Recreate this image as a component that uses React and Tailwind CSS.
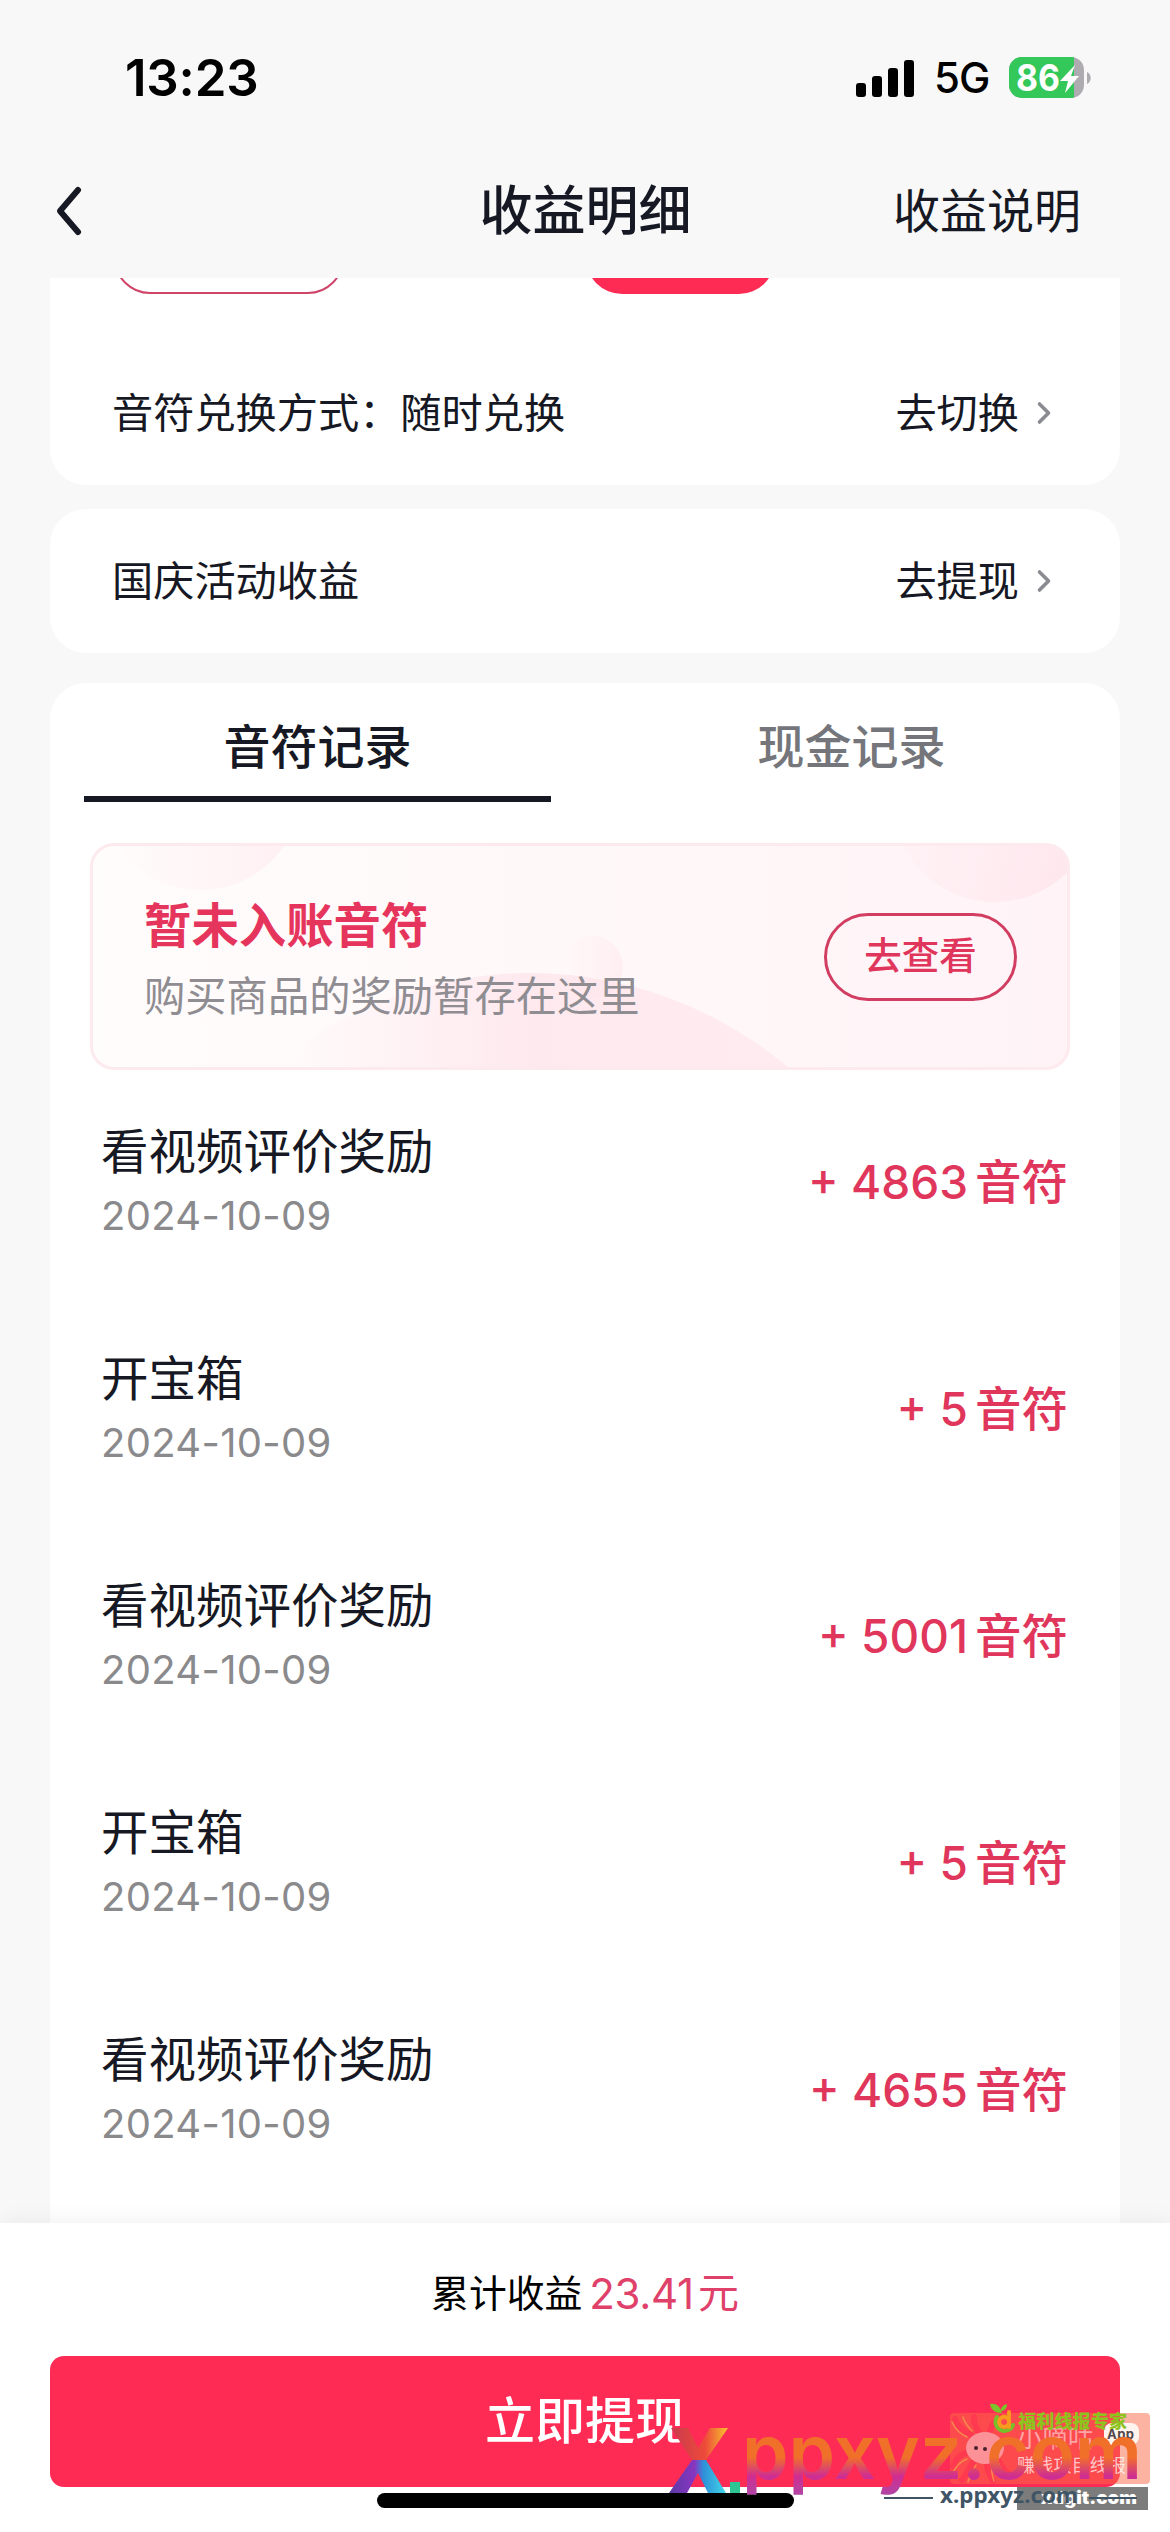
import { ChevronRight } from 'lucide-react';

const records = [
  { id: 1, title: '看视频评价奖励', date: '2024-10-09', amount: 4863 },
  { id: 2, title: '开宝箱', date: '2024-10-09', amount: 5 },
  { id: 3, title: '看视频评价奖励', date: '2024-10-09', amount: 5001 },
  { id: 4, title: '开宝箱', date: '2024-10-09', amount: 5 },
  { id: 5, title: '看视频评价奖励', date: '2024-10-09', amount: 4655 },
];

function StatusBar() {
  return (
    <div className="h-[144px] flex items-start justify-between pl-[125px] pr-[78px] pt-[46px] text-black">
      <span className="text-[51px] leading-[64px] font-semibold tracking-[-0.2px]">13:23</span>
      <div className="flex items-center h-[64px]">
        <div className="flex items-end gap-[6px] h-[37px]">
          <span className="w-[10px] h-[14px] rounded-[3px] bg-black" />
          <span className="w-[10px] h-[21px] rounded-[3px] bg-black" />
          <span className="w-[10px] h-[29px] rounded-[3px] bg-black" />
          <span className="w-[10px] h-[37px] rounded-[3px] bg-black" />
        </div>
        <span className="ml-[20px] w-[75px] text-[42px] leading-[64px] font-medium tracking-[-1px]">5G</span>
        <svg className="w-[83px] h-[42px] overflow-visible" viewBox="0 0 83 42">
          <defs>
            <clipPath id="battery"><rect x="0" y="0" width="75" height="41" rx="13" /></clipPath>
          </defs>
          <g clipPath="url(#battery)">
            <rect width="75" height="41" fill="#aeacb0" />
            <rect width="65" height="41" fill="#34c759" />
          </g>
          <path d="M78 15c5 2 5 10 0 12z" fill="#aeacb0" />
          <text x="7" y="34" fontSize="37" fontWeight="700" fill="#fff" textLength="44" lengthAdjust="spacingAndGlyphs">86</text>
          <path d="M66 8 51 24h8l-3 12 14-17h-8z" fill="#fff" />
        </svg>
      </div>
    </div>
  );
}

function NavBar() {
  return (
    <div className="h-[134px] grid grid-cols-[1fr_auto_1fr] items-center pl-[54px] pr-[89px] text-[#161823]">
      <svg className="w-[30px] h-[52px]" viewBox="0 0 30 52" fill="none" stroke="currentColor" strokeWidth="6" strokeLinecap="round" strokeLinejoin="round">
        <path d="M24 5 6 26l18 21" />
      </svg>
      <h1 className="text-[53px] leading-[64px] font-medium ml-[36px]">收益明细</h1>
      <span className="justify-self-end text-[47px] leading-[64px]">收益说明</span>
    </div>
  );
}

function LinkRow({ label, action }) {
  return (
    <div className="flex items-center justify-between pl-[62px] pr-[58px] text-[41.2px] leading-[60px] text-[#161823]">
      <span>{label}</span>
      <span className="flex items-center">
        {action}
        <ChevronRight className="ml-[7px] w-[36px] h-[36px] text-[#8a8b91]" strokeWidth={2.4} />
      </span>
    </div>
  );
}

function PendingBanner() {
  return (
    <div className="relative overflow-hidden ml-[40px] mt-[41px] w-[980px] h-[227px] rounded-[24px] border-[3px] border-[#fdeaee] bg-linear-to-r from-[#fffcfc] via-[#fff8f9] to-[#fff3f7] flex items-center justify-between pl-[51px] pr-[50px]">
      <svg className="absolute -left-[3px] -top-[3px] w-[980px] h-[227px]" viewBox="0 0 980 227">
        <defs>
          <linearGradient id="blob" x1="0" y1="0" x2="1" y2="0.3">
            <stop offset="0" stopColor="#ffe3ea" stopOpacity="0" />
            <stop offset="1" stopColor="#fde0e8" stopOpacity="0.6" />
          </linearGradient>
          <linearGradient id="blobFaint" x1="0" y1="0" x2="1" y2="0">
            <stop offset="0" stopColor="#ffe9ee" stopOpacity="0" />
            <stop offset="1" stopColor="#ffe6ec" stopOpacity="0.55" />
          </linearGradient>
          <linearGradient id="wave" x1="0.2" y1="0" x2="0.75" y2="0">
            <stop offset="0" stopColor="#ffe3ec" stopOpacity="0" />
            <stop offset="0.55" stopColor="#fde2ea" stopOpacity="0.7" />
            <stop offset="1" stopColor="#ffe3ea" stopOpacity="0.6" />
          </linearGradient>
        </defs>
        <circle cx="111" cy="-53" r="100" fill="url(#blobFaint)" />
        <circle cx="905" cy="-44" r="103" fill="url(#blob)" />
        <circle cx="502" cy="124" r="31" fill="url(#blobFaint)" />
        <circle cx="440" cy="530" r="400" fill="url(#wave)" />
      </svg>
      <div className="relative pt-[6px]">
        <div className="text-[47.4px] leading-[64px] font-bold text-[#e6355c]">暂未入账音符</div>
        <div className="mt-[8px] text-[41.3px] leading-[60px] text-[#8f8d92]">购买商品的奖励暂存在这里</div>
      </div>
      <button className="relative w-[193px] h-[88px] rounded-full border-[3px] border-[#d23d62] text-[37.5px] font-medium text-[#e0365c]">去查看</button>
    </div>
  );
}

function RecordRow({ record }) {
  return (
    <div className="h-[227px] flex items-start justify-between pl-[51px] pr-[52px]">
      <div>
        <div className="text-[47.5px] leading-[64px] text-[#161823]">{record.title}</div>
        <div className="mt-[4px] text-[40px] leading-[56px] tracking-[0.3px] text-[#8a8a8c]">{record.date}</div>
      </div>
      <div className="mt-[30px] flex items-center font-medium text-[#e0365c] leading-[64px]">
        <span className="text-[46px] mr-[7px]">+ {record.amount}</span>
        <span className="text-[46.5px]">音符</span>
      </div>
    </div>
  );
}

// Site marks stamped over the lower right corner
function Watermarks() {
  return (
    <svg className="absolute left-[660px] bottom-0 w-[510px] h-[132px] pointer-events-none" viewBox="660 2400 510 132">
      <defs>
        <linearGradient id="xTop" x1="0" y1="0" x2="1" y2="0">
          <stop offset="0" stopColor="#c93a4e" />
          <stop offset="0.6" stopColor="#ee4a3a" />
          <stop offset="1" stopColor="#f7c52e" />
        </linearGradient>
        <linearGradient id="xBottom" x1="0" y1="0" x2="1" y2="0">
          <stop offset="0" stopColor="#5a3aa8" />
          <stop offset="0.45" stopColor="#8a35c0" />
          <stop offset="0.6" stopColor="#2f8fd8" />
          <stop offset="1" stopColor="#3fd8e8" />
        </linearGradient>
        <linearGradient id="site" gradientUnits="userSpaceOnUse" x1="0" y1="2437" x2="0" y2="2495">
          <stop offset="0.35" stopColor="#f0702a" />
          <stop offset="0.68" stopColor="#cf2d92" />
          <stop offset="1" stopColor="#b046a4" />
        </linearGradient>
      </defs>

      <rect x="950" y="2413" width="200" height="71" rx="4" fill="#fa6846" fillOpacity="0.5" />
      <g fill="none" strokeLinecap="round">
        <path d="M972 2436c-8-6-14-8-17-17M979 2432c-4-7-6-10-5-15M990 2431c2-7 5-11 10-14M968 2452c-8 2-12 6-15 14M974 2461c-5 6-6 12-12 19M987 2464c0 7 3 12 6 17M998 2460c4 8 8 12 13 16" stroke="#ff3a50" strokeWidth="6" />
        <path d="M952 2422c4 9 9 12 15 15M963 2417c2 7 5 10 9 14M953 2473c3-7 8-12 14-14M968 2482c2-8 5-11 8-17M994 2481c-2-6-3-10-2-15M1006 2479c-4-5-6-9-7-15" stroke="#f58a4e" strokeWidth="1.5" />
      </g>
      <ellipse cx="985" cy="2448" rx="19" ry="16" fill="#fc9298" />
      <circle cx="976" cy="2448" r="2" fill="#48202c" />
      <circle cx="985" cy="2449" r="2" fill="#48202c" />
      <text x="1017" y="2447" fontSize="25" fill="#fff" fillOpacity="0.5" textLength="76">小嘀咕</text>
      <rect x="1104" y="2423" width="35" height="22" rx="8" fill="#fff5ee" />
      <text x="1107" y="2439" fontSize="13" fontWeight="700" fill="#54464a" textLength="27">App</text>
      <text x="1017" y="2472" fontSize="18" fill="#fff" fillOpacity="0.7" textLength="109">赚钱项目线报</text>

      <path d="M671 2428h17l10 20 12-20h18l-22 32h-14z" fill="url(#xTop)" />
      <path d="M692 2460h14l20 33h-18l-10-20-11 20h-18z" fill="url(#xBottom)" />
      <rect x="730" y="2482" width="10" height="11" fill="#2fc493" />
      <text x="742" y="2479" fontSize="76" fontWeight="600" fill="url(#site)" textLength="400" lengthAdjust="spacingAndGlyphs">ppxyz.com</text>

      <g fill="none" strokeWidth="4" strokeLinecap="round">
        <path d="M997 2417a9 9 0 1 0 16 8" stroke="#79bf2a" />
        <path d="M1009 2412v15M1009 2421a5 5 0 1 0-1 4" stroke="#f79a1e" />
      </g>
      <path d="M990 2404c6-1 10 2 12 9-7 0-11-3-12-9zM1001 2411c0-4 2-6 6-7 0 4-2 7-6 7z" fill="#79c52a" />
      <text x="1018" y="2428" fontSize="18" fontWeight="900" fill="#8dc21f" textLength="109">福利线报专家</text>

      <rect x="1017" y="2487" width="131" height="23" fill="#7c7c7c" />
      <text x="1041" y="2504" fontSize="18" fontWeight="900" fill="#fff" textLength="96" lengthAdjust="spacingAndGlyphs">xdgit.com</text>
      <g fill="#3f5566">
        <rect x="884" y="2497" width="49" height="2" />
        <rect x="1089" y="2497" width="48" height="2" />
        <text x="940" y="2503" fontSize="21" fontWeight="700" textLength="138" lengthAdjust="spacingAndGlyphs" className="font-['Noto_Sans']">x.ppxyz.com</text>
      </g>
    </svg>
  );
}

export default function App() {
  return (
    <div className="relative w-[1170px] h-[2532px] overflow-hidden flex flex-col bg-[#f8f8f8] font-['Inter','Noto_Sans_CJK_SC',sans-serif]">
      <StatusBar />
      <NavBar />

      <main className="flex-1 min-h-0 overflow-hidden px-[50px]">
        <section className="h-[207px] rounded-b-[36px] bg-white overflow-hidden">
          <div className="flex items-end h-[16px] pl-[64px]">
            <div className="shrink-0 w-[230px] h-[72px] rounded-full border-2 border-[#cf4468]" />
            <div className="shrink-0 ml-[242px] w-[189px] h-[72px] rounded-full bg-[#fe2c55]" />
          </div>
          <div className="mt-[89px]">
            <LinkRow label="音符兑换方式：随时兑换" action="去切换" />
          </div>
        </section>

        <section className="mt-[24px] h-[144px] rounded-[36px] bg-white flex flex-col justify-center">
          <LinkRow label="国庆活动收益" action="去提现" />
        </section>

        <section className="mt-[30px] h-[1600px] rounded-t-[36px] bg-white">
          <div className="flex gap-[67px] pl-[34px] h-[119px] text-[47px] leading-[64px] font-medium text-center">
            <div className="w-[467px] pt-[32px] border-b-[6px] border-[#161823] text-[#161823]">音符记录</div>
            <div className="w-[467px] pt-[32px] text-[#75767b]">现金记录</div>
          </div>
          <PendingBanner />
          <div className="pt-[50px]">
            {records.map((r) => <RecordRow key={r.id} record={r} />)}
          </div>
        </section>
      </main>

      <footer className="relative h-[309px] bg-white shadow-[0_-4px_20px_rgba(0,0,0,0.05)] px-[50px]">
        <div className="h-[133px] pt-[8px] flex items-center justify-center text-black">
          <span className="text-[37.8px] mr-[7px]">累计收益</span>
          <span className="text-[42px] tracking-[-0.3px] text-[#e0416a]">23.41</span>
          <span className="text-[41px] ml-[4px] text-[#e0416a]">元</span>
        </div>
        <button className="block w-full h-[131px] rounded-[14px] bg-[#fe2c55] text-white text-[50px] font-medium">立即提现</button>
        <div className="mx-auto mt-[6px] w-[417px] h-[15px] rounded-full bg-black" />
      </footer>

      <Watermarks />
    </div>
  );
}
